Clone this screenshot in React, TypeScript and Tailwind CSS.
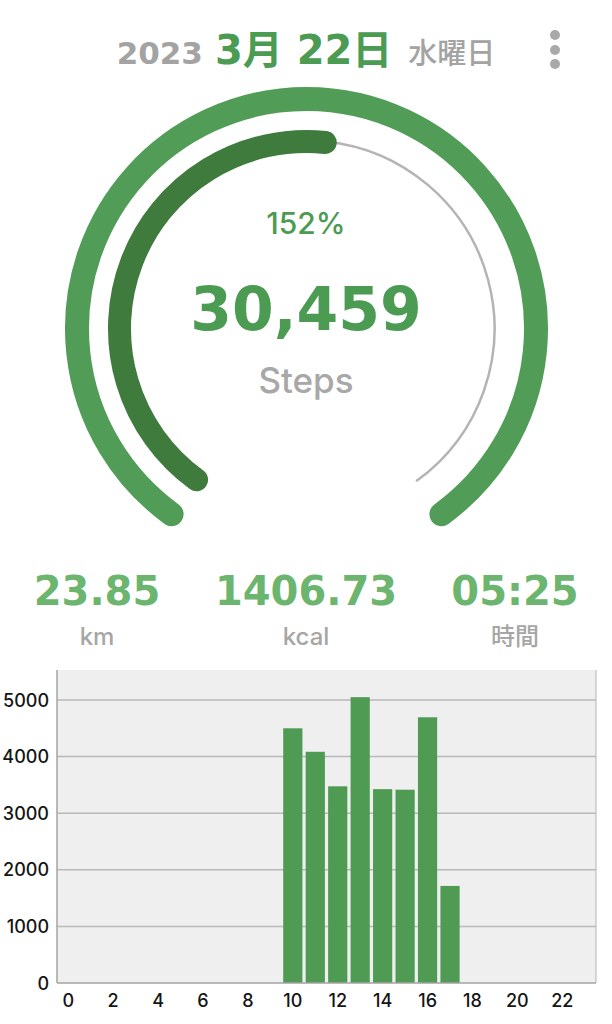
import React from "react";

const CX = 306.5;
const CY = 248.5;

function polar(r: number, deg: number): [number, number] {
  const a = (deg * Math.PI) / 180;
  return [CX + r * Math.sin(a), CY - r * Math.cos(a)];
}

function arc(r: number, a0: number, a1: number): string {
  const [x0, y0] = polar(r, a0);
  const [x1, y1] = polar(r, a1);
  const large = a1 - a0 > 180 ? 1 : 0;
  return `M ${x0.toFixed(2)} ${y0.toFixed(2)} A ${r} ${r} 0 ${large} 1 ${x1.toFixed(2)} ${y1.toFixed(2)}`;
}

const START = -144;
const END = 144;
const PROG = START + 288 * 0.52;

const bars: Record<number, number> = {
  10: 4500,
  11: 4085,
  12: 3475,
  13: 5050,
  14: 3425,
  15: 3415,
  16: 4695,
  17: 1715,
};

function Gauge() {
  return (
    <div className="relative h-[460px] w-full">
      <svg width="612" height="460" viewBox="0 0 612 460" className="block">
        <path d={arc(229.5, START, END)} fill="none" stroke="#519d57" strokeWidth={24} strokeLinecap="round" />
        <path d={arc(188, PROG, END)} fill="none" stroke="#b4b4b4" strokeWidth={2.5} strokeLinecap="round" />
        <path d={arc(187, START, PROG)} fill="none" stroke="#3f7b3c" strokeWidth={23} strokeLinecap="round" />
      </svg>
      <div className="absolute left-0 right-0 top-[128px] text-center text-[30px] leading-none font-medium text-[#4c9b53]" style={{ fontFamily: "Inter, sans-serif" }}>
        152%
      </div>
      <div className="absolute left-0 right-0 top-[199px] text-center text-[60px] leading-none font-bold text-[#4c9b53]" style={{ fontFamily: "'DejaVu Sans', sans-serif" }}>
        30,459
      </div>
      <div className="absolute left-0 right-0 top-[283px] text-center text-[35px] leading-none font-medium text-[#a8a8a8]" style={{ fontFamily: "Inter, sans-serif" }}>
        Steps
      </div>
    </div>
  );
}

function Chart() {
  const left = 57;
  const right = 596;
  const top = 10;
  const base = 323;
  const slot = (right - left) / 24;
  const perUnit = 0.0566;
  const bw = 19.2;
  const grid = [1000, 2000, 3000, 4000, 5000];
  return (
    <svg width="612" height="364" viewBox="0 0 612 364" className="block">
      <rect x={left} y={top} width={right - left} height={base - top} fill="#efefef" />
      <line x1={right} y1={top} x2={right} y2={base} stroke="#b3b3b3" strokeWidth={1} />
      {grid.map((v) => (
        <line key={v} x1={left} x2={right} y1={base - v * perUnit} y2={base - v * perUnit} stroke="#b9b9b9" strokeWidth={1.5} />
      ))}
      {Object.entries(bars).map(([h, v]) => {
        const hr = Number(h);
        const x = left + slot * hr + (slot - bw) / 2;
        const hgt = v * perUnit;
        return <rect key={h} x={x} y={base - hgt} width={bw} height={hgt} fill="#4f9b54" />;
      })}
      <line x1={left} y1={top} x2={left} y2={base} stroke="#a3a3a3" strokeWidth={1.5} />
      <line x1={left} y1={base} x2={right} y2={base} stroke="#a3a3a3" strokeWidth={1.5} />
      {[0, 1000, 2000, 3000, 4000, 5000].map((v) => (
        <text key={v} x={49} y={base - v * perUnit + 6.5} textAnchor="end" fontSize={18} fontWeight={500} fill="#151515" fontFamily="Inter, sans-serif">
          {v}
        </text>
      ))}
      {[0, 2, 4, 6, 8, 10, 12, 14, 16, 18, 20, 22].map((h) => (
        <text key={h} x={left + slot * (h + 0.5)} y={347} textAnchor="middle" fontSize={18} fontWeight={500} fill="#151515" fontFamily="Inter, sans-serif">
          {h}
        </text>
      ))}
    </svg>
  );
}

function Stat({ value, unit }: { value: string; unit: string }) {
  return (
    <div className="flex flex-col items-center">
      <div className="text-[40px] leading-none font-bold text-[#6cb56e]" style={{ fontFamily: "'DejaVu Sans', sans-serif" }}>
        {value}
      </div>
      <div className="mt-[14px] text-[24px] leading-none font-medium text-[#a6a6a6]" style={{ fontFamily: "Inter, 'Noto Sans CJK JP', sans-serif" }}>
        {unit}
      </div>
    </div>
  );
}

export default function App() {
  return (
    <div className="w-[612px] h-[1024px] bg-white overflow-hidden flex flex-col">
      <div className="relative h-[80px] pt-[20px] flex items-center justify-center">
        <div className="flex items-baseline" style={{ fontFamily: "'DejaVu Sans', 'Noto Sans CJK JP', sans-serif" }}>
          <span className="text-[31px] font-bold text-[#a3a3a3]">2023</span>
          <span className="ml-[12px] text-[40px] font-bold text-[#4c9b53]">3月 22日</span>
          <span className="ml-[16px] text-[29px] font-medium text-[#a3a3a3]" style={{ fontFamily: "'Noto Sans CJK JP', sans-serif" }}>水曜日</span>
        </div>
        <div className="absolute left-[550px] top-[30px] flex flex-col gap-[4.5px]">
          <div className="w-[10px] h-[10px] rounded-full bg-[#a9a9a9]" />
          <div className="w-[10px] h-[10px] rounded-full bg-[#a9a9a9]" />
          <div className="w-[10px] h-[10px] rounded-full bg-[#a9a9a9]" />
        </div>
      </div>
      <Gauge />
      <div className="h-[120px] pt-[31px] px-[2px] grid grid-cols-3 gap-[19px]">
        <Stat value="23.85" unit="km" />
        <Stat value="1406.73" unit="kcal" />
        <Stat value="05:25" unit="時間" />
      </div>
      <Chart />
    </div>
  );
}
